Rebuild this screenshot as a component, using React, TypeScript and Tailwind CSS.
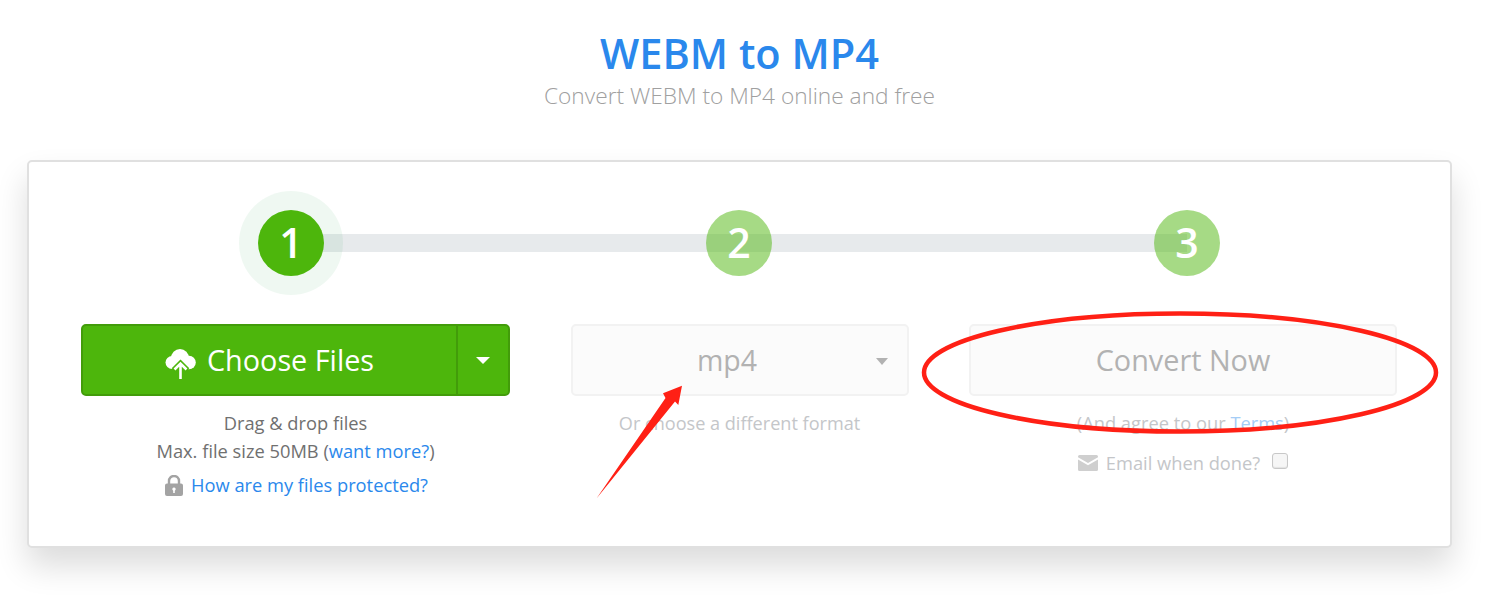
export default function App() {
  return (
    <div className="relative w-[1496px] h-[608px] overflow-hidden bg-white font-['Open_Sans','Noto_Sans',sans-serif]">
      <header className="w-[1479px] flex flex-col items-center pt-[25px]">
        <h1 className="text-[41.5px] leading-[56px] font-semibold text-[#2a88ec]">WEBM to MP4</h1>
        <p className="text-[22.7px] leading-[30px] font-light text-[#a0a0a0] mt-0">Convert WEBM to MP4 online and free</p>
      </header>

      <main className="ml-[27px] mt-[49px] w-[1425px] h-[388px] rounded-[5px] border-2 border-[#e0e0e0] bg-white shadow-[0_18px_32px_rgba(0,0,0,0.14)] pl-[52px] pt-[48px]">
        <div className="relative ml-[177px] w-[962px] flex justify-between items-center h-[66px]">
          <div className="absolute left-[33px] right-[33px] top-[24px] h-[18px] bg-[#e7eaec]" />
          <div className="relative w-[66px] h-[66px] rounded-full bg-[#4db60c] flex items-center justify-center text-white text-[41px] font-semibold shadow-[0_0_0_19px_rgba(50,170,90,0.08)]">1</div>
          <div className="relative w-[66px] h-[66px] rounded-full bg-[#4db60c]/50 flex items-center justify-center text-white text-[41px] font-semibold">2</div>
          <div className="relative w-[66px] h-[66px] rounded-full bg-[#4db60c]/50 flex items-center justify-center text-white text-[41px] font-semibold">3</div>
        </div>

        <div className="grid grid-cols-[429px_338px_428px] gap-x-[60.5px] mt-[48px]">
          <section className="flex flex-col items-center">
            <div className="w-full h-[72px] flex rounded-[5px] border-2 border-[#429c0a] bg-[#4db60c] text-white">
              <div className="flex-1 flex items-center justify-center gap-[11px] border-r-2 border-[#429c0a]">
                <svg width="31" height="30" viewBox="0 0 31 30" className="mt-[8px]">
                  <circle cx="7" cy="13.500" r="6.500" fill="#fff" />
                  <circle cx="15" cy="9" r="9" fill="#fff" />
                  <circle cx="24" cy="13.500" r="6.800" fill="#fff" />
                  <rect x="7" y="12" width="17" height="8" fill="#fff" />
                  <path d="M15.500 16V30M9 21.500l6.500-6.500 6.500 6.500" fill="none" stroke="#4db60c" strokeWidth="6.500" />
                  <path d="M15.500 16V30M9.500 20.500l6-6 6 6" fill="none" stroke="#fff" strokeWidth="2.600" />
                </svg>
                <span className="text-[28.8px] leading-none">Choose Files</span>
              </div>
              <div className="w-[50px] flex items-center justify-center">
                <div className="w-0 h-0 border-x-[7px] border-x-transparent border-t-[7px] border-t-white" />
              </div>
            </div>
            <p className="mt-[13px] text-[18.3px] leading-[28px] text-[#707070]">Drag &amp; drop files</p>
            <p className="text-[18.3px] leading-[28px] text-[#707070]">Max. file size 50MB (<span className="text-[#2a88ec]">want more?</span>)</p>
            <p className="ml-[2px] mt-[6px] flex items-center gap-[8px] text-[18.3px] leading-[28px] text-[#2a88ec]">
              <svg width="18" height="21" viewBox="0 0 18 21">
                <path d="M4 9V6a5 5 0 0 1 10 0v3" fill="none" stroke="#a3a3a3" strokeWidth="2.400" />
                <path fillRule="evenodd" d="M2 8.500h14a2 2 0 0 1 2 2V19a2 2 0 0 1-2 2H2a2 2 0 0 1-2-2v-8.500a2 2 0 0 1 2-2zM9 12.500a1.700 1.700 0 0 0-.8 3.200V18h1.600v-2.300A1.700 1.700 0 0 0 9 12.500z" fill="#a3a3a3" />
              </svg>
              How are my files protected?
            </p>
          </section>

          <section className="flex flex-col items-center">
            <div className="relative w-full h-[72px] rounded-[5px] border-2 border-[#f2f2f2] bg-[#fbfbfb] flex items-center justify-center text-[28.5px] text-[#b2b2b2] pr-[25px]">
              mp4
              <div className="absolute right-[19px] top-[32px] w-0 h-0 border-x-[6.500px] border-x-transparent border-t-[7px] border-t-[#b2b2b2]" />
            </div>
            <p className="mt-[13px] text-[18.1px] leading-[28px] text-[#c4c6c9]">Or choose a different format</p>
          </section>

          <section className="flex flex-col items-center">
            <div className="w-full h-[72px] rounded-[5px] border-2 border-[#f2f2f2] bg-[#fbfbfb] flex items-center justify-center text-[28.8px] text-[#b2b2b2]">Convert Now</div>
            <p className="mt-[13px] text-[18.3px] leading-[28px] text-[#c4c6c9]">(And agree to our <span className="text-[#a5cdf6]">Terms</span>)</p>
            <div className="mt-[12px] flex items-center text-[18.3px] leading-[28px] text-[#c4c6c9]">
              <svg width="20" height="16" viewBox="0 0 20 16" className="mr-[8px]">
                <path d="M1.500 0h17A1.500 1.500 0 0 1 20 1.500v.8L10 8 0 2.300v-.8A1.500 1.500 0 0 1 1.500 0z" fill="#cfcfcf" />
                <path d="M0 4.500l10 5.700 10-5.700v10A1.500 1.500 0 0 1 18.500 16h-17A1.500 1.500 0 0 1 0 14.500z" fill="#cfcfcf" />
              </svg>
              Email when done?
              <span className="ml-[12px] mb-[4px] w-[16px] h-[16px] rounded-[3px] border border-[#c8c8c8] bg-[#f6f6f6] shadow-[inset_0_-1px_1px_rgba(0,0,0,0.08)]" />
            </div>
          </section>
        </div>
      </main>

      <svg className="absolute inset-0 pointer-events-none" width="1496" height="608" viewBox="0 0 1496 608">
        <ellipse cx="1180" cy="372.500" rx="256" ry="59" fill="none" stroke="#ff2015" strokeWidth="4.500" />
        <path d="M596.500 498.500L665.500 398 L663 393.300 L682 385.700 L678.300 405 L675 401.500z" fill="#ff2015" />
      </svg>
    </div>
  );
}
